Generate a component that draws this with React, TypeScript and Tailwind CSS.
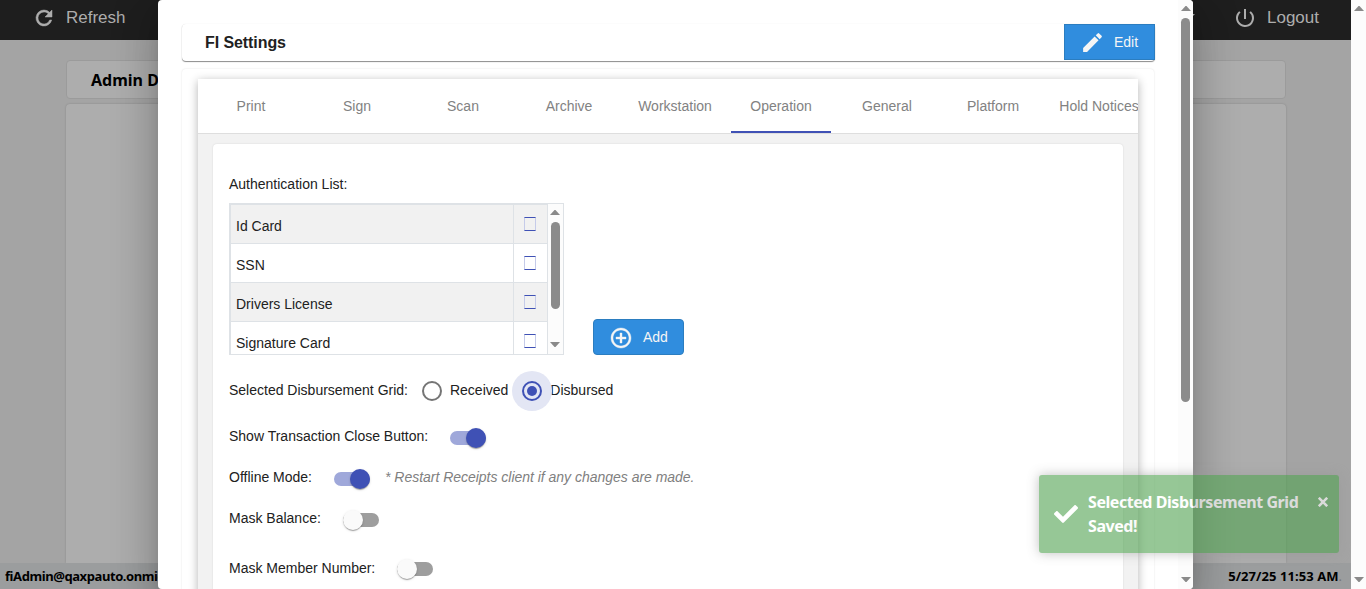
import type { ReactNode } from "react";

const tabs = ["Print", "Sign", "Scan", "Archive", "Workstation", "Operation", "General", "Platform", "Hold Notices"];
const authentication = ["Id Card", "SSN", "Drivers License", "Signature Card"];

function Arrow({ down = false }: { down?: boolean }) {
  return (
    <svg width="10" height="5" viewBox="0 0 10 5" className="shrink-0" fill="#8a8a8a">
      <path d={down ? "M0 0H10L5.5 5H4.5Z" : "M0 5H10L5.5 0H4.5Z"} />
    </svg>
  );
}

function Icon({ size, path, className = "" }: { size: number; path: string; className?: string }) {
  return (
    <svg width={size} height={size} viewBox="0 0 24 24" fill="currentColor" className={`shrink-0 ${className}`}>
      <path d={path} />
    </svg>
  );
}

function Toggle({ on = false }: { on?: boolean }) {
  return (
    <span className={on ? "flex h-[14px] w-9 items-center justify-end rounded-full bg-[#9fa8da]" : "flex h-[14px] w-9 items-center rounded-full bg-[#9e9e9e]"}>
      <span
        className={
          on
            ? "size-5 rounded-full bg-[#3f51b5] shadow-[0_2px_1px_-1px_rgba(0,0,0,.2),0_1px_1px_rgba(0,0,0,.14),0_1px_3px_rgba(0,0,0,.12)]"
            : "size-5 rounded-full bg-[#fafafa] shadow-[0_2px_1px_-1px_rgba(0,0,0,.2),0_1px_1px_rgba(0,0,0,.14),0_1px_3px_rgba(0,0,0,.12)]"
        }
      />
    </span>
  );
}

function Row({ className, children }: { className: string; children: ReactNode }) {
  return <div className={`flex h-5 items-center whitespace-nowrap ${className}`}>{children}</div>;
}

function Page() {
  return (
    <div className="flex h-[589px] w-[1351px] flex-col bg-[#a4a4a4]">
      <header className="flex h-10 shrink-0 justify-between bg-[#1e1e1e] pr-8 pl-8 text-[17px] text-[#adadad]">
        <div className="flex h-[35px] items-center gap-[10px]">
          <Icon size={24} path="M17.65 6.35A7.96 7.96 0 0 0 12 4a8 8 0 1 0 7.73 10h-2.08A6 6 0 1 1 12 6c1.66 0 3.14.69 4.22 1.78L13 11h7V4z" className="stroke-current stroke-[.5]" />
          <span>Refresh</span>
        </div>
        <div className="flex h-[35px] items-center">
          <svg width="10" height="5" viewBox="0 0 10 5" className="mr-[38px] -translate-y-px" fill="currentColor">
            <path d="M0 0H10L5 5Z" />
          </svg>
          <Icon size={24} path="M13 3h-2v10h2V3zm4.83 2.17l-1.42 1.42A6.92 6.92 0 0 1 19 12a7 7 0 1 1-11.42-5.42L6.17 5.17A8.93 8.93 0 0 0 3 12a9 9 0 1 0 14.83-6.83z" />
          <span className="ml-[10px]">Logout</span>
        </div>
      </header>
      <main className="flex min-h-0 flex-1 flex-col gap-[5px] pt-5 pr-[65px] pl-[66px]">
        <div className="flex h-[39px] shrink-0 items-center rounded-[4px] border border-[#9b9b9b] bg-[#adadad] pl-6 font-['Noto_Sans','Open_Sans',sans-serif] text-[16px] font-bold text-black">
          Admin Dashboard
        </div>
        <div className="flex-1 rounded-t-[4px] bg-[#adadad] shadow-[0_0_2px_rgba(0,0,0,.2)]" />
      </main>
      <footer className="flex h-[26px] shrink-0 items-center justify-between bg-[#9b9d9e] pt-px pr-[11px] pl-[5px] font-['Noto_Sans','Open_Sans',sans-serif] text-[13px] font-bold text-black">
        <span className="tracking-[-0.42px]">fiAdmin@qaxpauto.onmicrosoft.com</span>
        <span className="tracking-[0.06px]">5/27/25 11:53 AM<span className="font-normal tracking-[-2px] text-[#777]">.</span></span>
      </footer>
    </div>
  );
}

function AuthenticationList() {
  return (
    <div className="mt-[9px] flex items-end gap-[29px]">
      <div className="flex h-[152px] w-[335px] overflow-hidden border border-[#dee2e6]">
        <div className="h-[170px] w-[318px] shrink-0 border-t border-l border-[#dee2e6]">
          {authentication.map((item) => (
            <div key={item} className="flex h-[39px] border-b border-[#dee2e6] odd:bg-[#f1f1f1]">
              <div className="w-[283px] border-r border-[#dee2e6] pt-[11px] pl-[5px] leading-5">{item}</div>
              <div className="flex flex-1 justify-center border-r border-[#dee2e6] pt-[12px] pr-px">
                <span className="h-[14px] w-3 border-x border-y border-x-[#c5cbe9] border-y-[#3f51b5]" />
              </div>
            </div>
          ))}
        </div>
        <div className="flex h-[150px] flex-1 flex-col items-center bg-[#fcfcfc] pt-[6px] pr-px pb-[7px]">
          <Arrow />
          <div className="mt-[7px] h-[87px] w-[9px] rounded-full bg-[#8b8b8b]" />
          <div className="flex-1" />
          <Arrow down />
        </div>
      </div>
      <button className="flex h-9 w-[91px] items-center rounded-[4px] border border-[#2b7dc0] bg-[#308dde] pl-[15px] text-[#f5f5f5]">
        <Icon size={24} className="translate-y-px stroke-current stroke-[.4]" path="M13 7h-2v4H7v2h4v4h2v-4h4v-2h-4V7zm-1-5C6.48 2 2 6.48 2 12s4.48 10 10 10 10-4.48 10-10S17.52 2 12 2zm0 18c-4.41 0-8-3.59-8-8s3.59-8 8-8 8 3.59 8 8-3.59 8-8 8z" />
        <span className="ml-[10px]">Add</span>
      </button>
    </div>
  );
}

function SettingsDialog() {
  return (
    <section className="absolute top-0 left-[158px] flex h-[589px] w-[1035px] overflow-hidden rounded-[4px] bg-white text-[#212121]">
      <div className="w-[1020px] pt-6 pl-6">
        <div className="flex h-[37px] w-[973px] justify-between rounded-[4px] pl-[23px] shadow-[0_1px_1px_rgba(0,0,0,.45),0_0_1px_rgba(0,0,0,.12)]">
          <h1 className="pt-[7px] text-[16px] leading-6 font-bold tracking-[-0.08px]">FI Settings</h1>
          <button className="flex h-9 w-[91px] items-center border border-[#2b7dc0] bg-[#308dde] pl-[15px] text-[#f5f5f5]">
            <Icon size={25} path="M3 17.25V21h3.75L17.81 9.94l-3.75-3.75L3 17.25zM20.71 7.04a1 1 0 0 0 0-1.41l-2.34-2.34a1 1 0 0 0-1.41 0l-1.83 1.83 3.75 3.75 1.83-1.83z" />
            <span className="ml-[9px]">Edit</span>
          </button>
        </div>
        <div className="mt-2 h-[540px] w-[972px] rounded-[4px] pt-[10px] pl-[16px] shadow-[0_0_2px_rgba(0,0,0,.12)]">
          <div className="h-[540px] w-[940px] bg-[#f2f2f2] shadow-[0_2px_9px_rgba(0,0,0,.3)]">
            <nav className="flex h-[55px] gap-[6px] overflow-hidden border-b border-[#dedede] bg-white pl-[3px] text-[#828282]">
              {tabs.map((tab) => (
                <div
                  key={tab}
                  className={
                    tab === "Operation"
                      ? "flex h-[54px] w-[100px] shrink-0 items-center justify-center border-b-2 border-[#3f51b5] pt-[2px]"
                      : "flex h-[54px] w-[100px] shrink-0 items-center justify-center whitespace-nowrap"
                  }
                >
                  {tab}
                </div>
              ))}
            </nav>
            <div className="mt-[10px] ml-[15px] h-[500px] w-[910px] rounded-[4px] bg-white pt-[30px] pl-[16px] shadow-[0_0_2px_rgba(0,0,0,.13)]">
              <div className="h-5 leading-5">Authentication List:</div>
              <AuthenticationList />
              <Row className="mt-[25px]">
                <span>Selected Disbursement Grid:</span>
                <span className="ml-[14px] size-5 translate-y-px rounded-full border-2 border-[#757575]" />
                <span className="ml-2">Received</span>
                <span className="ml-1 flex size-10 translate-y-px items-center justify-center rounded-full bg-[#e3e6f4]">
                  <span className="flex size-5 items-center justify-center rounded-full border-2 border-[#3f51b5]">
                    <span className="size-[10px] rounded-full bg-[#3f51b5]" />
                  </span>
                </span>
                <span className="-ml-[2px]">Disbursed</span>
              </Row>
              <Row className="mt-[26px]">
                <span className="w-[221px]">Show Transaction Close Button:</span>
                <span className="translate-y-[2px]"><Toggle on /></span>
              </Row>
              <Row className="mt-[21px]">
                <span className="w-[105px]">Offline Mode:</span>
                <span className="translate-y-[2px]"><Toggle on /></span>
                <i className="ml-[15px] tracking-[-0.02px] text-[#808080]">* Restart Receipts client if any changes are made.</i>
              </Row>
              <Row className="mt-[21px]">
                <span className="w-[114px]">Mask Balance:</span>
                <span className="translate-y-[2px]"><Toggle /></span>
              </Row>
              <Row className="mt-[30px]">
                <span className="w-[168px]">Mask Member Number:</span>
                <span className="translate-y-px"><Toggle /></span>
              </Row>
            </div>
          </div>
        </div>
      </div>
      <div className="flex w-[15px] flex-col items-center bg-[#fcfcfc] pt-[6px] pb-[7px]">
        <Arrow />
        <div className="mt-[7px] h-[384px] w-[9px] rounded-full bg-[#8b8b8b]" />
        <div className="flex-1" />
        <Arrow down />
      </div>
    </section>
  );
}

function Toast() {
  return (
    <aside className="absolute top-[475px] left-[1039px] flex h-[78px] w-[300px] rounded-[3px] bg-[#51a351] pl-[15px] font-['Noto_Sans','Open_Sans',sans-serif] text-[16px] leading-6 font-bold text-white opacity-60 shadow-[0_0_12px_#999]">
      <svg width="24" height="24" viewBox="0 0 512 512" fill="currentColor" className="mt-[27px] shrink-0">
        <path d="M173.898 439.404 7.498 273.004c-9.997-9.997-9.997-26.206 0-36.204l36.203-36.204c9.997-9.998 26.207-9.998 36.204 0L192 312.69 432.095 72.596c9.997-9.997 26.207-9.997 36.204 0l36.203 36.204c9.997 9.997 9.997 26.206 0 36.204l-294.4 294.401c-9.998 9.997-26.207 9.997-36.204-.001z" />
      </svg>
      <div className="ml-[10px] w-[220px] pt-[15px] tracking-[-0.44px] whitespace-nowrap">
        Selected Disbursement Grid<br />Saved!
      </div>
      <svg width="10" height="10" viewBox="0 0 10 10" stroke="currentColor" strokeWidth="2.6" className="mt-[22px] ml-[10px]">
        <path d="M.8.8 9.2 9.2M9.2.8.8 9.2" />
      </svg>
    </aside>
  );
}

export default function App() {
  return (
    <div className="relative flex h-[589px] w-[1366px] overflow-hidden font-['Liberation_Sans',Arial,sans-serif] text-[14px]">
      <Page />
      <div className="flex w-[15px] flex-col items-center justify-between bg-[#fcfcfc] pt-[6px] pb-[7px]">
        <Arrow />
        <Arrow down />
      </div>
      <div className="absolute inset-y-0 left-0 w-[1351px] overflow-hidden">
        <div className="absolute top-0 left-[158px] h-[589px] w-[1035px] rounded-[4px] shadow-[0_11px_15px_-7px_rgba(0,0,0,.2),0_24px_38px_3px_rgba(0,0,0,.14),0_9px_46px_8px_rgba(0,0,0,.12)]" />
        <SettingsDialog />
      </div>
      <Toast />
    </div>
  );
}
